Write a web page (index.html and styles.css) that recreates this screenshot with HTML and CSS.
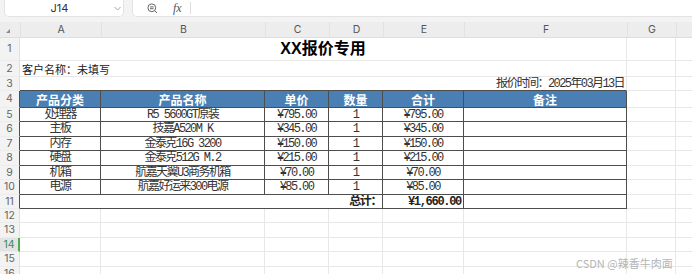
FILE: index.html
```html
<!DOCTYPE html>
<html lang="zh">
<head>
<meta charset="utf-8">
<link rel="stylesheet" href="styles.css">
</head>
<body>
<div class="toolbar">
  <div class="namebox">
    <span class="ref">J14</span>
    <svg class="chev" width="7" height="5" viewBox="0 0 7 5"><path d="M0.5 1 L3.5 4 L6.5 1" fill="none" stroke="#9a9a9a" stroke-width="0.9"/></svg>
  </div>
  <div class="formula">
    <svg class="zoomic" width="11" height="11" viewBox="0 0 11 11"><circle cx="4.8" cy="4.8" r="3.9" fill="none" stroke="#666" stroke-width="1"/><path d="M3 3.9 H6.6 M3 5.7 H6.6 M7.7 7.7 L10 10" stroke="#666" stroke-width="1" fill="none"/></svg>
    <span class="fx">fx</span>
    <span class="sep"></span>
  </div>
</div>
<div class="sheet">
  <div class="row colhead">
    <div class="corner"><svg width="4" height="4" viewBox="0 0 4 4"><polygon points="4,0 4,4 0,4" fill="#8a8a8a"/></svg></div>
    <div class="ch">A</div><div class="ch">B</div><div class="ch">C</div><div class="ch">D</div><div class="ch">E</div><div class="ch">F</div><div class="ch">G</div><div class="ch"></div>
  </div>
  <div class="row h23">
    <div class="rh">1</div><div class="c m6 title">XX报价专用</div><div class="c"></div><div class="c"></div>
  </div>
  <div class="row h16">
    <div class="rh">2</div><div class="c m6 cust">客户名称：未填写</div><div class="c"></div><div class="c"></div>
  </div>
  <div class="row h14">
    <div class="rh">3</div><div class="c m6 date tb">报价时间：2025年03月13日</div><div class="c"></div><div class="c"></div>
  </div>
  <div class="row h17">
    <div class="rh edge">4</div>
    <div class="c t th">产品分类</div><div class="c t th">产品名称</div><div class="c t th">单价</div><div class="c t th">数量</div><div class="c t th">合计</div><div class="c t th">备注</div>
    <div class="c"></div><div class="c"></div>
  </div>
  <div class="row h14">
    <div class="rh edge">5</div>
    <div class="c t td">处理器</div><div class="c t td">R5 5600GT原装</div><div class="c t td">¥795.00</div><div class="c t td">1</div><div class="c t td">¥795.00</div><div class="c t td"></div>
    <div class="c"></div><div class="c"></div>
  </div>
  <div class="row h15">
    <div class="rh edge">6</div>
    <div class="c t td">主板</div><div class="c t td">技嘉A520M K</div><div class="c t td">¥345.00</div><div class="c t td">1</div><div class="c t td">¥345.00</div><div class="c t td"></div>
    <div class="c"></div><div class="c"></div>
  </div>
  <div class="row h14">
    <div class="rh edge">7</div>
    <div class="c t td">内存</div><div class="c t td">金泰克16G 3200</div><div class="c t td">¥150.00</div><div class="c t td">1</div><div class="c t td">¥150.00</div><div class="c t td"></div>
    <div class="c"></div><div class="c"></div>
  </div>
  <div class="row h15">
    <div class="rh edge">8</div>
    <div class="c t td">硬盘</div><div class="c t td">金泰克512G M.2</div><div class="c t td">¥215.00</div><div class="c t td">1</div><div class="c t td">¥215.00</div><div class="c t td"></div>
    <div class="c"></div><div class="c"></div>
  </div>
  <div class="row h14">
    <div class="rh edge">9</div>
    <div class="c t td">机箱</div><div class="c t td">航嘉天翼U3商务机箱</div><div class="c t td">¥70.00</div><div class="c t td">1</div><div class="c t td">¥70.00</div><div class="c t td"></div>
    <div class="c"></div><div class="c"></div>
  </div>
  <div class="row h15">
    <div class="rh edge">10</div>
    <div class="c t td">电源</div><div class="c t td">航嘉好运来300电源</div><div class="c t td">¥85.00</div><div class="c t td">1</div><div class="c t td">¥85.00</div><div class="c t td"></div>
    <div class="c"></div><div class="c"></div>
  </div>
  <div class="row h14">
    <div class="rh edge">11</div>
    <div class="c t m4 sumlabel">总计：</div><div class="c t sum">¥1,660.00</div><div class="c t"></div>
    <div class="c"></div><div class="c"></div>
  </div>
  <div class="row h14">
    <div class="rh">12</div><div class="c"></div><div class="c"></div><div class="c"></div><div class="c"></div><div class="c"></div><div class="c"></div><div class="c"></div><div class="c"></div>
  </div>
  <div class="row h15">
    <div class="rh">13</div><div class="c"></div><div class="c"></div><div class="c"></div><div class="c"></div><div class="c"></div><div class="c"></div><div class="c"></div><div class="c"></div>
  </div>
  <div class="row h14">
    <div class="rh sel">14</div><div class="c"></div><div class="c"></div><div class="c"></div><div class="c"></div><div class="c"></div><div class="c"></div><div class="c"></div><div class="c"></div>
  </div>
  <div class="row h15">
    <div class="rh">15</div><div class="c"></div><div class="c"></div><div class="c"></div><div class="c"></div><div class="c"></div><div class="c"></div><div class="c"></div><div class="c"></div>
  </div>
  <div class="row h14">
    <div class="rh">16</div><div class="c"></div><div class="c"></div><div class="c"></div><div class="c"></div><div class="c"></div><div class="c"></div><div class="c"></div><div class="c"></div>
  </div>
</div>
<div class="watermark">CSDN @辣香牛肉面</div>
</body>
</html>
```
FILE: styles.css
```css
* { box-sizing: border-box; }
body {
  margin: 0;
  width: 692px;
  height: 274px;
  overflow: hidden;
  background: #fff;
  position: relative;
  font-family: "Noto Sans CJK SC", sans-serif;
}
.toolbar {
  display: flex;
  gap: 8px;
  height: 22px;
  padding: 0 0 5px 4px;
  background: #f3f3f3;
}
.namebox {
  width: 120px;
  height: 17px;
  background: #fff;
  border: 1px solid #e3e3e3;
  border-top: 0;
  border-radius: 0 0 5px 5px;
  display: flex;
  align-items: center;
}
.ref {
  width: 109px;
  text-align: center;
  font: 11px Inter, "Noto Sans", sans-serif;
  color: #333;
}
.chev { margin-left: 0; }
.formula {
  flex: 1;
  height: 17px;
  background: #fff;
  border: 1px solid #e3e3e3;
  border-top: 0;
  border-right: 0;
  border-radius: 0 0 0 5px;
  display: flex;
  align-items: center;
  padding-left: 14px;
}
.fx {
  margin-left: 15px;
  font: italic 12px "Liberation Serif", serif;
  color: #555;
}
.sep {
  margin-left: 8px;
  width: 1px;
  height: 12px;
  background: #dedede;
}
.row {
  display: grid;
  grid-template-columns: 20px 81px 164px 64px 54px 81px 163px 49px 60px;
}
.colhead {
  height: 16px;
  background: #ededed;
  border-bottom: 1px solid #dedede;
}
.corner {
  display: flex;
  align-items: flex-end;
  justify-content: flex-start;
  padding: 0 0 4px 6px;
}
.ch {
  display: flex;
  align-items: center;
  justify-content: center;
  font: 10.5px Inter, "Noto Sans", sans-serif;
  color: #555;
  border-left: 1px solid #e2e2e2;
}
.h14 { height: 14px; }
.h15 { height: 15px; }
.h16 { height: 16px; }
.h17 { height: 17px; }
.h23 { height: 23px; }
.rh {
  background: #f3f3f3;
  color: #666;
  font: 10.5px/12px Inter, "Noto Sans", sans-serif;
  display: flex;
  align-items: center;
  justify-content: center;
  border-right: 1px solid #e0e0e0;
  border-bottom: 1px solid #ececec;
}
.rh.edge { border-right-color: #4d4d4d; }
.rh.sel {
  background: #e3e3e3;
  color: #3d8a5e;
  border-right: 2px solid #4caf50;
}
.c {
  display: flex;
  align-items: center;
  border-right: 1px solid #e8e8e8;
  border-bottom: 1px solid #e8e8e8;
  white-space: nowrap;
  overflow: hidden;
  line-height: 12px;
}
.m6 { grid-column: span 6; }
.m4 { grid-column: span 4; }
.title {
  justify-content: center;
  font: bold 16px/18px "Liberation Sans", "Noto Sans CJK SC", sans-serif;
  color: #000;
}
.cust {
  padding-left: 2px;
  font: 11px/12px "Noto Sans CJK SC", sans-serif;
  color: #222;
}
.date {
  justify-content: flex-end;
  padding-right: 2px;
  font: 12px/12px "Liberation Mono", "Noto Sans CJK SC", monospace;
  letter-spacing: -1.6px;
  color: #333;
}
.tb { border-bottom-color: #4d4d4d; }
.t {
  border-right-color: #4d4d4d;
  border-bottom-color: #4d4d4d;
}
.th {
  justify-content: center;
  background: #4a7fb4;
  color: #fff;
  font: bold 12px/13px "Noto Sans CJK SC", sans-serif;
}
.td {
  justify-content: center;
  font: 12px/12px "Liberation Mono", "Noto Sans CJK SC", monospace;
  letter-spacing: -1.6px;
  color: #333;
}
.sumlabel {
  justify-content: flex-end;
  padding-right: 1px;
  font: bold 12px/12px "Liberation Mono", "Noto Sans CJK SC", monospace;
  letter-spacing: -1.4px;
  color: #222;
}
.sum {
  justify-content: flex-end;
  padding-right: 2px;
  font: bold 12px/12px "Liberation Mono", "Noto Sans CJK SC", monospace;
  letter-spacing: -1.3px;
  color: #222;
}
.watermark {
  position: absolute;
  left: 576px;
  top: 255px;
  font: 11px "Noto Sans CJK SC", sans-serif;
  color: #b5b5b5;
}
```
